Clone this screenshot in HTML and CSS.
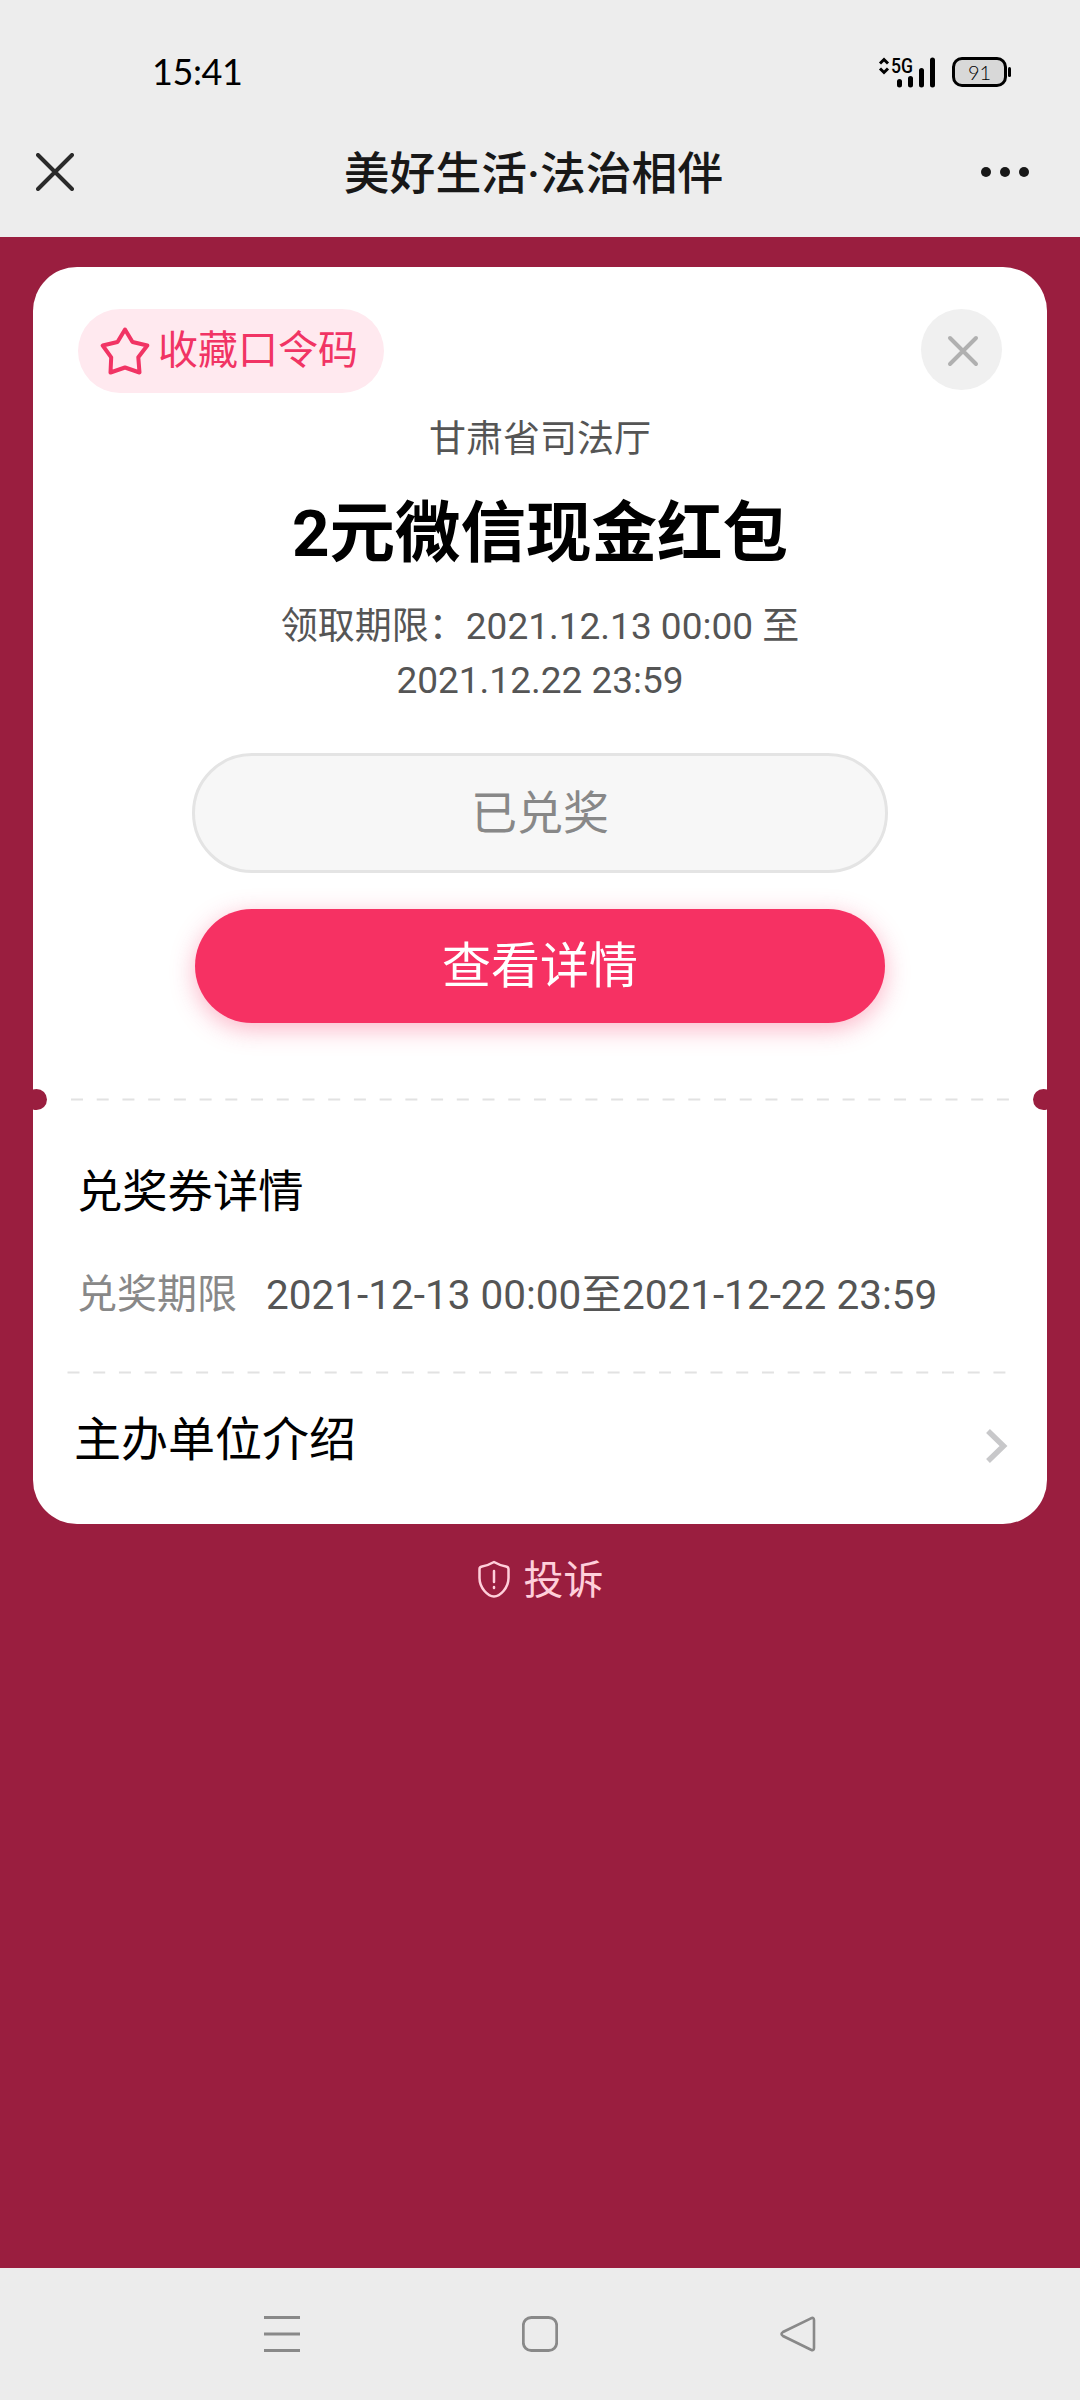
FILE: index.html
```html
<!DOCTYPE html>
<html lang="zh-CN">
<head>
<meta charset="utf-8">
<title>美好生活·法治相伴</title>
<link rel="stylesheet" href="styles.css">
</head>
<body>
<div class="screen">
  <header class="top">
    <div class="status">
      <span class="clock">15:41</span>
      <div class="indicators">
        <svg class="signal" width="58" height="34" viewBox="0 0 58 34">
          <path d="M2 8.500 6 4.500 10 8.500M2 13.500 6 17.500 10 13.500" fill="none" stroke="#000" stroke-width="3"/>
          <text x="13" y="18" class="network" textLength="22" lengthAdjust="spacingAndGlyphs">5G</text>
          <path d="M21.500 26.500V30M32.500 23.500V30M43.500 15.500V30M54.500 5V30" stroke="#000" stroke-width="5" stroke-linecap="round"/>
        </svg>
        <div class="battery">91</div>
      </div>
    </div>
    <div class="navbar">
      <svg class="close" width="38" height="38" viewBox="0 0 38 38"><path d="M2 2 36 36M36 2 2 36" stroke="#2a2a2a" stroke-width="4" stroke-linecap="round"/></svg>
      <h1 class="page-title">美好生活·法治相伴</h1>
      <svg class="more" width="50" height="12" viewBox="0 0 50 12" fill="#181818"><circle cx="6" cy="6" r="5"/><circle cx="25" cy="6" r="5"/><circle cx="44" cy="6" r="5"/></svg>
    </div>
  </header>

  <main class="content">
    <section class="card">
      <div class="card-head">
        <button class="favorite">
          <svg width="50" height="50" viewBox="0 0 50 50"><path d="M25 3.500 32.500 16 47.300 19.500 38.300 31.300 39.500 46.500 25 41.500 10.500 46.500 11.200 31.300 2.700 19.500 17.500 16Z" fill="none" stroke="#f13464" stroke-width="4" stroke-linejoin="round"/></svg>
          <span>收藏口令码</span>
        </button>
        <button class="dismiss">
          <svg width="34" height="34" viewBox="0 0 34 34"><path d="M4 4 30 30M30 4 4 30" stroke="#b0b0b0" stroke-width="4" stroke-linecap="round"/></svg>
        </button>
      </div>
      <p class="issuer">甘肃省司法厅</p>
      <h2 class="prize">2元微信现金红包</h2>
      <p class="period">领取期限：2021.12.13 00:00 至<br>2021.12.22 23:59</p>
      <div class="actions">
        <button class="btn used">已兑奖</button>
        <button class="btn detail">查看详情</button>
      </div>
      <div class="tear">
        <svg width="940" height="3" viewBox="0 0 940 3"><path d="M1 1.500H939" stroke="#e2e2e2" stroke-width="2" stroke-dasharray="12 13.720"/></svg>
      </div>
      <h3 class="subtitle">兑奖券详情</h3>
      <div class="info"><span class="label">兑奖期限</span><span class="dates">2021-12-13 00:00至2021-12-22 23:59</span></div>
      <svg class="rule" width="940" height="3" viewBox="0 0 940 3"><path d="M.5 1.500H939" stroke="#e2e2e2" stroke-width="2" stroke-dasharray="12 13.720"/></svg>
      <div class="organizer">
        <span>主办单位介绍</span>
        <svg width="24" height="36" viewBox="0 0 24 36"><path d="M3 3 18.500 18 3 33" fill="none" stroke="#c8c8ca" stroke-width="5.500"/></svg>
      </div>
    </section>
    <div class="complain">
      <svg width="32" height="38" viewBox="0 0 32 38" fill="none" stroke="#ffcfda" stroke-width="2.500" stroke-linecap="round" stroke-linejoin="round"><path d="M16 2Q22 5.500 28 6.500Q30.500 7 30.500 9V18C30.500 28 22 36.500 16 36.500S1.500 28 1.500 18V9Q1.500 7 4 6.500Q10 5.500 16 2ZM16 11V22M16 27V28"/></svg>
      <span>投诉</span>
    </div>
  </main>

  <nav class="system-nav">
    <svg width="36" height="36" viewBox="0 0 36 36"><path d="M0 1.500H36M0 18H36M0 34.500H36" stroke="#898989" stroke-width="3"/></svg>
    <svg width="36" height="36" viewBox="0 0 36 36"><rect x="1.300" y="1.500" width="33.400" height="33" rx="8" fill="none" stroke="#898989" stroke-width="2.800"/></svg>
    <svg width="36" height="36" viewBox="0 0 36 36"><path d="M31 2.300 3 16Q0 18 3 20L31 33.700Q34 35 34 32V4Q34 1 31 2.300Z" fill="none" stroke="#898989" stroke-width="2.600"/></svg>
  </nav>
</div>
</body>
</html>
```

FILE: styles.css
```css
* { box-sizing: border-box; }
body, h1, h2, h3, p { margin: 0; }
body, button { font-family: Roboto, "Noto Sans CJK SC", sans-serif; }
button { border: 0; padding: 0; }
svg { display: block; flex: none; }

.screen {
  width: 1080px;
  height: 2400px;
  display: flex;
  flex-direction: column;
  background: #9a1e3f;
}
.top { height: 237px; background: #ededed; }
.status {
  height: 130px;
  padding: 14px 70px 0 152px;
  display: flex;
  justify-content: space-between;
  align-items: center;
}
.clock { padding-bottom: 2px; font: 36px/44px Lato, sans-serif; color: #000; letter-spacing: -.4px; }
.indicators { display: flex; align-items: center; gap: 16px; margin-right: 3px; padding-bottom: 1px; }
.network { font: 500 20px Roboto, sans-serif; }
.battery {
  position: relative;
  width: 55px;
  height: 30px;
  border: 3px solid #000;
  border-radius: 10px;
  background: #d8d8d8;
  font: 300 20px/24px Lato, sans-serif;
  text-align: center;
}
.battery::after {
  content: "";
  position: absolute;
  right: -7px;
  top: 7px;
  width: 3px;
  height: 10px;
  border-radius: 2px;
  background: #000;
}
.navbar {
  height: 84px;
  padding: 0 50px 0 36px;
  display: flex;
  justify-content: space-between;
  align-items: center;
}
.page-title { padding: 5px 0 0 13px; font-size: 45.8px; line-height: 60px; font-weight: 500; color: #181818; }

.content { flex: 1; padding: 30px 33px 0; }
.card { height: 1257px; border-radius: 44px; background: #fff; }
.card-head {
  height: 126px;
  padding: 42px 45px 0;
  display: flex;
  justify-content: space-between;
  align-items: flex-start;
}
.favorite {
  width: 306px;
  height: 84px;
  padding-left: 22px;
  display: flex;
  align-items: center;
  gap: 8px;
  border-radius: 42px;
  background: #ffe9ef;
  color: #f13464;
  font-size: 40px;
}
.favorite span { padding-bottom: 8px; }
.dismiss {
  width: 81px;
  height: 81px;
  padding: 2px 0 0 2px;
  display: flex;
  align-items: center;
  justify-content: center;
  border-radius: 50%;
  background: #f0f0f0;
}
.issuer, .prize, .period { text-align: center; }
.issuer { margin-top: 20px; font-size: 37px; line-height: 54px; color: #555; }
.prize { margin-top: 19px; font-size: 65.5px; line-height: 96px; font-weight: 700; color: #000; }
.period { margin-top: 18px; font-size: 37px; line-height: 54px; color: #555; }
.actions { margin-top: 45px; display: flex; flex-direction: column; align-items: center; gap: 36px; }
.btn { padding-bottom: 9px; border-radius: 60px; }
.used { width: 696px; height: 120px; border: 3px solid #e4e4e4; background: #f7f7f7; color: #888; font-size: 46px; }
.detail { width: 690px; height: 114px; background: #f63163; color: #fff; font-size: 49px; box-shadow: 0 6px 24px rgba(247, 49, 100, .36); }
.tear {
  position: relative;
  height: 21px;
  margin-top: 66px;
  padding-left: 37px;
  display: flex;
  align-items: center;
  overflow: hidden;
}
.tear::before, .tear::after {
  content: "";
  position: absolute;
  top: 0;
  width: 21px;
  height: 21px;
  border-radius: 50%;
  background: #9a1e3f;
}
.tear::before { left: -7px; }
.tear::after { right: -7px; }
.subtitle { margin: 51px 0 0 44px; font-size: 45.3px; line-height: 64px; font-weight: 400; color: #000; }
.info { margin: 41px 0 0 44px; display: flex; gap: 29px; font-size: 40px; line-height: 58px; color: #555; }
.label { color: #888; }
.dates { font-size: 40.5px; }
.rule { margin: 47px 0 0 34px; }
.organizer {
  height: 130px;
  padding: 0 38px 0 41px;
  display: flex;
  justify-content: space-between;
  align-items: center;
  font-size: 47px;
  color: #000;
}
.organizer span { padding-bottom: 8px; }
.organizer svg { margin-top: 13px; }
.complain {
  margin-top: 25px;
  padding-left: 1px;
  display: flex;
  justify-content: center;
  align-items: center;
  gap: 14px;
  font-size: 40px;
  line-height: 60px;
  color: #ffcfda;
}
.complain span { padding-top: 2px; }
.complain svg { margin-bottom: 2px; }
.system-nav {
  height: 132px;
  display: flex;
  justify-content: center;
  align-items: center;
  gap: 222px;
  background: #ececec;
}
```
